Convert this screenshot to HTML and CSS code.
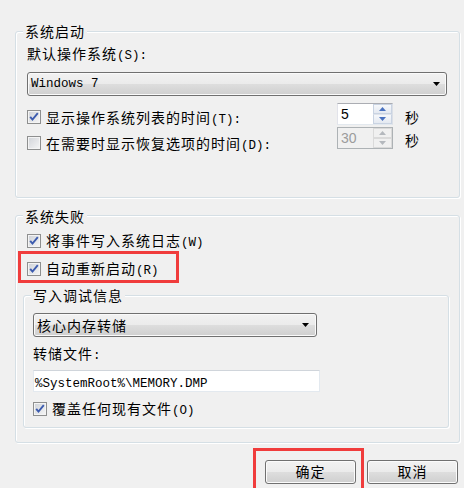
FILE: index.html
```html
<!DOCTYPE html>
<html lang="zh-CN">
<head>
<meta charset="utf-8">
<link rel="stylesheet" href="styles.css">
</head>
<body>
<div class="dialog">
  <div class="group g1">
    <div class="legend">系统启动</div>
    <div class="label lab1">默认操作系统<span class="a">(S):</span></div>
    <div class="select s1"><span class="mono">Windows 7</span><svg class="arrow" width="7" height="4" viewBox="0 0 7 4"><path d="M0 0h7L3.5 4z" fill="#000"/></svg></div>
    <div class="srow r1">
      <span class="cb"><svg width="12" height="12" viewBox="0 0 12 12"><path d="M2.2 5.8l2.3 2.8L9.8 2.2" fill="none" stroke="#3c5bae" stroke-width="1.9"/></svg></span>
      <span class="stxt t1">显示操作系统列表的时间<span class="a">(T):</span></span>
      <span class="spin"><span class="val">5</span><span class="btns"><span class="up"><svg width="7" height="4" viewBox="0 0 7 4"><path d="M0 4h7L3.5 0z" fill="#4a72c0"/></svg></span><span class="dn"><svg width="7" height="4" viewBox="0 0 7 4"><path d="M0 0h7L3.5 4z" fill="#4a72c0"/></svg></span></span></span>
      <span class="unit u1">秒</span>
    </div>
    <div class="srow r2">
      <span class="cb off"></span>
      <span class="stxt t2">在需要时显示恢复选项的时间<span class="a">(D):</span></span>
      <span class="spin dis"><span class="val">30</span><span class="btns"><span class="up"><svg width="7" height="4" viewBox="0 0 7 4"><path d="M0 4h7L3.5 0z" fill="#b4b8bd"/></svg></span><span class="dn"><svg width="7" height="4" viewBox="0 0 7 4"><path d="M0 0h7L3.5 4z" fill="#b4b8bd"/></svg></span></span></span>
      <span class="unit u2">秒</span>
    </div>
  </div>

  <div class="group g2">
    <div class="legend">系统失败</div>
    <div class="crow c1">
      <span class="cb"><svg width="12" height="12" viewBox="0 0 12 12"><path d="M2.2 5.8l2.3 2.8L9.8 2.2" fill="none" stroke="#3c5bae" stroke-width="1.9"/></svg></span>
      <span>将事件写入系统日志<span class="a">(W)</span></span>
    </div>
    <div class="crow c2">
      <span class="cb"><svg width="12" height="12" viewBox="0 0 12 12"><path d="M2.2 5.8l2.3 2.8L9.8 2.2" fill="none" stroke="#3c5bae" stroke-width="1.9"/></svg></span>
      <span>自动重新启动<span class="a">(R)</span></span>
    </div>
    <div class="group g3">
      <div class="legend lg3">写入调试信息</div>
      <div class="select s2"><span>核心内存转储</span><svg class="arrow" width="7" height="4" viewBox="0 0 7 4"><path d="M0 0h7L3.5 4z" fill="#000"/></svg></div>
      <div class="label lab2">转储文件<span class="a">:</span></div>
      <div class="input"><span class="mono">%SystemRoot%\MEMORY.DMP</span></div>
      <div class="crow c3">
        <span class="cb"><svg width="12" height="12" viewBox="0 0 12 12"><path d="M2.2 5.8l2.3 2.8L9.8 2.2" fill="none" stroke="#3c5bae" stroke-width="1.9"/></svg></span>
        <span>覆盖任何现有文件<span class="a">(O)</span></span>
      </div>
    </div>
  </div>

  <div class="buttons">
    <div class="btn">确定</div>
    <div class="btn">取消</div>
  </div>

  <div class="mark m1"></div>
  <div class="mark m2"></div>
</div>
</body>
</html>
```
FILE: styles.css
```css
* { box-sizing: border-box; }
html, body { margin: 0; }
body {
  background: #f0f0f0;
  width: 464px;
  height: 488px;
  overflow: hidden;
  font-family: "Noto Sans CJK SC", sans-serif;
  font-size: 14px;
  letter-spacing: 1px;
  line-height: 16px;
  color: #000;
}
.dialog {
  position: relative;
  height: 488px;
  padding: 31px 5px 0 15px;
}
.a {
  font-family: "Liberation Mono", monospace;
  font-size: 12.5px;
  letter-spacing: 0;
}
.mono {
  font-family: "Liberation Mono", monospace;
  font-size: 12.5px;
  letter-spacing: 0;
  font-weight: bold;
}
.group {
  width: 445px;
  border: 1px solid #d5dfe5;
  border-radius: 3px;
  box-shadow: inset 1px 1px 0 #fff, 1px 1px 0 #fff;
  padding: 0 12px 0 11px;
}
.g1 { height: 167px; }
.g2 { height: 228px; margin-top: 17px; }
.legend {
  display: table;
  margin: -9px 0 0 -4px;
  padding: 0 2px;
  background: #f0f0f0;
  height: 16px;
}
.g2 > .legend { margin-top: -8px; }
.lab1 { margin-top: 6px; }
.select {
  display: flex;
  align-items: center;
  justify-content: space-between;
  height: 24px;
  border: 1px solid #707070;
  border-radius: 3px;
  background: linear-gradient(#f2f2f2 0%, #ebebeb 48%, #dddddd 52%, #cfcfcf 100%);
  box-shadow: inset 0 0 0 1px #fafafa;
}
.s1 { margin-top: 8px; padding: 0 6px 0 3px; }
.s1 .mono { font-weight: normal; }
.srow {
  display: flex;
  align-items: flex-start;
  height: 22px;
  padding-right: 27px;
}
.r1 { margin-top: 7px; }
.r2 { margin-top: 2px; }
.cb {
  flex: none;
  display: flex;
  align-items: center;
  justify-content: center;
  width: 14px;
  height: 14px;
  border: 1px solid #8e8f8f;
  background: linear-gradient(135deg, #cdd1d7, #f7f7f7);
  box-shadow: inset 0 0 0 1px #f4f4f4;
}
.cb.off { background: linear-gradient(135deg, #d0d3d8, #f6f6f6); }
.r1 .cb { margin-top: 7px; }
.r2 .cb { margin-top: 9px; }
.stxt { flex: 1; margin-left: 5px; }
.t1 { margin-top: 6px; }
.t2 { margin-top: 8px; }
.spin {
  flex: none;
  display: flex;
  width: 56px;
  height: 22px;
  border: 1px solid #abadb3;
  border-color: #abadb3 #dbdfe6 #e3e9ef #e2e3ea;
  background: #fff;
}
.spin .val {
  flex: 1;
  padding-left: 3px;
  font-family: "Liberation Sans", sans-serif;
  font-size: 14px;
  letter-spacing: 0;
  line-height: 20px;
}
.btns {
  width: 19px;
  display: flex;
  flex-direction: column;
}
.btns .up, .btns .dn {
  flex: 1;
  display: flex;
  align-items: center;
  justify-content: center;
  border: 1px solid #c9d3e2;
  background: linear-gradient(#f6f8fb, #e4e9f1);
}
.btns .dn { border-top-color: #dfe4ec; }
.spin.dis { border-color: #adb2b5; background: #f0f0f0; }
.spin.dis .val { color: #9c9c9c; background: #f0f0f0; }
.spin.dis .btns .up, .spin.dis .btns .dn { border-color: #dadada; background: #f0f0f0; }
.unit { margin-left: 12px; }
.u1 { margin-top: 6px; }
.u2 { margin-top: 5px; }
.crow {
  display: flex;
  align-items: center;
  gap: 5px;
  height: 16px;
}
.c1 { margin-top: 9px; }
.c2 { margin-top: 12px; }
.g3 {
  width: auto;
  height: 133px;
  margin: 18px -2px 0 -4px;
  padding: 0 0 0 9px;
}
.lg3 { margin-left: -2px; }
.s2 {
  width: 284px;
  margin-top: 10px;
  padding: 0 7px 0 3px;
}
.lab2 { margin-top: 8px; }
.input {
  width: 287px;
  height: 22px;
  margin-top: 6px;
  padding-left: 1px;
  border: 1px solid #e3e9ef;
  border-top-color: #d0d5db;
  background: #fff;
  line-height: 20px;
}
.input .mono { font-weight: normal; }
.c3 { margin-top: 9px; }
.buttons {
  display: flex;
  justify-content: flex-end;
  gap: 11px;
  margin: 17px 1px 0 0;
}
.btn {
  width: 91px;
  height: 24px;
  border: 1px solid #707070;
  border-radius: 3px;
  background: linear-gradient(#f2f2f2 0%, #ebebeb 48%, #dddddd 52%, #cfcfcf 100%);
  box-shadow: inset 0 0 0 1px #fbfbfb;
  text-align: center;
  line-height: 21px;
}
.mark {
  position: absolute;
  border: 3px solid #f03c3c;
}
.m1 { left: 18px; top: 251px; width: 161px; height: 32px; }
.m2 { left: 253px; top: 448px; width: 111px; height: 50px; }
```
